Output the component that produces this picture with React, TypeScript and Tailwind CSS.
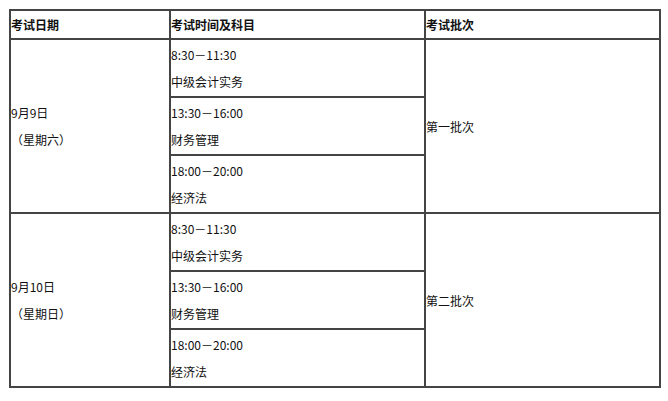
const slots = [
  { time: "8:30－11:30", subject: "中级会计实务" },
  { time: "13:30－16:00", subject: "财务管理" },
  { time: "18:00－20:00", subject: "经济法" },
];

const days = [
  { date: "9月9日", week: "（星期六）", batch: "第一批次" },
  { date: "9月10日", week: "（星期日）", batch: "第二批次" },
];

function Cell({ children, className = "" }: { children: React.ReactNode; className?: string }) {
  return (
    <div className={`bg-white flex flex-col justify-center leading-[27px] ${className}`}>
      {children}
    </div>
  );
}

export default function App() {
  return (
    <div
      className="min-h-screen bg-white pl-[9px] pt-[9px] text-[12px] text-[#111]"
      style={{ fontFamily: '"Noto Sans CJK SC", "Noto Sans", sans-serif' }}
    >
      <div className="inline-grid grid-cols-[158px_253px_233px] grid-rows-[27px_repeat(6,56px)] gap-[2px] p-[2px] bg-[#444]">
        <Cell className="font-bold">考试日期</Cell>
        <Cell className="font-bold">考试时间及科目</Cell>
        <Cell className="font-bold">考试批次</Cell>

        {days.map((day) => (
          <div key={day.date} className="contents">
            <Cell className="row-span-3">
              <div>{day.date}</div>
              <div>{day.week}</div>
            </Cell>
            <Cell>
              <div>{slots[0].time}</div>
              <div>{slots[0].subject}</div>
            </Cell>
            <Cell className="row-span-3">
              <div>{day.batch}</div>
            </Cell>
            {slots.slice(1).map((s) => (
              <Cell key={s.time} className="col-start-2">
                <div>{s.time}</div>
                <div>{s.subject}</div>
              </Cell>
            ))}
          </div>
        ))}
      </div>
    </div>
  );
}
